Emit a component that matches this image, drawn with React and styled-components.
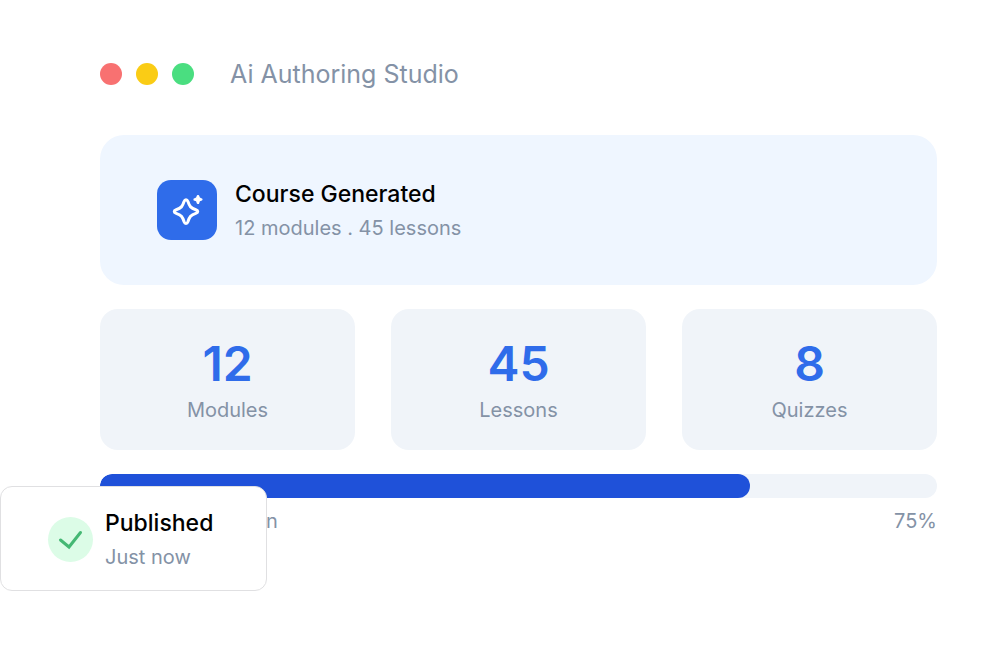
import React from "react";
import styled, { createGlobalStyle, css } from "styled-components";

const GlobalStyle = createGlobalStyle`
  *, *::before, *::after {
    box-sizing: border-box;
  }
  body {
    margin: 0;
    background: #ffffff;
    font-family: Inter, "Liberation Sans", sans-serif;
  }
  h1, h2, p, dl, dt, dd {
    margin: 0;
  }
`;

const mutedText = css`
  color: #8492a6;
  font-weight: 400;
  font-size: 20px;
  line-height: 32px;
`;

const Window = styled.main`
  position: relative;
  display: flex;
  flex-direction: column;
  gap: 24px;
  min-height: 100vh;
  padding: 54px 61px 54px 100px;
`;

const TitleBar = styled.header`
  display: flex;
  align-items: center;
  gap: 36px;
  margin-bottom: 17px;
`;

const Dots = styled.div`
  display: flex;
  gap: 14px;
`;

const Dot = styled.span`
  width: 22px;
  height: 22px;
  border-radius: 50%;
  background: ${(props) => props.$color};
`;

const WindowTitle = styled.h1`
  color: #8492a6;
  font-weight: 400;
  font-size: 25px;
  line-height: 40px;
`;

const Banner = styled.section`
  display: flex;
  align-items: center;
  gap: 18px;
  min-height: 150px;
  padding: 40px 57px;
  border-radius: 24px;
  background: #eff6ff;
`;

const IconTile = styled.div`
  display: flex;
  align-items: center;
  justify-content: center;
  width: 60px;
  height: 60px;
  border-radius: 14px;
  background: #2f6cea;
`;

const Heading = styled.h2`
  color: #000000;
  font-weight: 500;
  font-size: 23px;
  line-height: 36px;
`;

const Muted = styled.p`
  ${mutedText};
`;

const Stats = styled.dl`
  display: grid;
  grid-template-columns: repeat(3, 1fr);
  gap: 36px;
`;

const StatCard = styled.div`
  display: flex;
  flex-direction: column-reverse;
  align-items: center;
  padding: 24px 16px;
  border-radius: 18px;
  background: #f0f4f9;
`;

const StatValue = styled.dd`
  color: #2f6cea;
  font-weight: 600;
  font-size: 48px;
  line-height: 61px;
`;

const StatLabel = styled.dt`
  ${mutedText};
`;

const Track = styled.div`
  height: 24px;
  overflow: hidden;
  border-radius: 12px;
  background: #f0f4f9;
`;

const Fill = styled.div`
  height: 100%;
  border-radius: 12px;
  background: #1f51d9;
`;

const ProgressRow = styled.div`
  display: flex;
  justify-content: space-between;
  padding-top: 7px;
`;

/* sits over the lower left corner of the window */
const Toast = styled.aside`
  position: absolute;
  top: 486px;
  left: 0;
  display: flex;
  align-items: center;
  gap: 12px;
  width: 267px;
  padding: 18px 47px 17px;
  border: 1px solid #e0e0e2;
  border-radius: 12px;
  background: #ffffff;
`;

const CheckCircle = styled.div`
  display: flex;
  align-items: center;
  justify-content: center;
  flex-shrink: 0;
  width: 45px;
  height: 45px;
  border-radius: 50%;
  background: #dcfce7;
`;

const SparkleIcon = () => (
  <svg width="36" height="36" viewBox="0 0 36 36" fill="none" aria-hidden="true">
    <path
      d="M17 7.7C17.9 7.7 18.5 8.3 18.9 9.4C20.5 14.4 21.8 16.2 26.8 17.8C29.4 18.6 29.4 20.6 26.8 21.4C21.8 23 20.5 24.8 18.9 29.8C18.1 32 15.9 32 15.1 29.8C13.5 24.8 12.2 23 7.2 21.4C4.6 20.6 4.6 18.6 7.2 17.8C12.2 16.2 13.5 14.4 15.1 9.4C15.5 8.3 16.1 7.7 17 7.7Z"
      stroke="#ffffff"
      strokeWidth="3"
      strokeLinejoin="round"
    />
    <path
      d="M29 4.2C29.2 6.4 30.1 7.3 32.3 7.5C30.1 7.7 29.2 8.6 29 10.800C28.800 8.600 27.900 7.700 25.700 7.500C27.900 7.300 28.800 6.400 29 4.200Z"
      fill="#ffffff"
      stroke="#ffffff"
      strokeWidth="2.6"
      strokeLinejoin="round"
    />
  </svg>
);

const CheckIcon = () => (
  <svg width="45" height="45" viewBox="0 0 45 45" fill="none" aria-hidden="true">
    <path
      d="M12.500 23L21 30L32.500 15.500"
      stroke="#45b874"
      strokeWidth="3"
      strokeLinecap="round"
    />
  </svg>
);

const stats = [
  { label: "Modules", value: 12 },
  { label: "Lessons", value: 45 },
  { label: "Quizzes", value: 8 },
];

const Stat = ({ label, value }) => (
  <StatCard>
    <StatLabel>{label}</StatLabel>
    <StatValue>{value}</StatValue>
  </StatCard>
);

const Progress = ({ label, text, width }) => (
  <section>
    <Track>
      <Fill style={{ width: `${width}%` }} />
    </Track>
    <ProgressRow>
      <Muted>{label}</Muted>
      <Muted>{text}</Muted>
    </ProgressRow>
  </section>
);

const App = () => (
  <>
    <GlobalStyle />
    <Window>
      <TitleBar>
        <Dots>
          <Dot $color="#f87171" />
          <Dot $color="#facc15" />
          <Dot $color="#4ade80" />
        </Dots>
        <WindowTitle>Ai Authoring Studio</WindowTitle>
      </TitleBar>
      <Banner>
        <IconTile>
          <SparkleIcon />
        </IconTile>
        <div>
          <Heading>Course Generated</Heading>
          <Muted>12 modules . 45 lessons</Muted>
        </div>
      </Banner>
      <Stats>
        {stats.map((stat) => (
          <Stat key={stat.label} label={stat.label} value={stat.value} />
        ))}
      </Stats>
      <Progress label="Course Generation" text="75%" width={77.6} />
      <Toast>
        <CheckCircle>
          <CheckIcon />
        </CheckCircle>
        <div>
          <Heading>Published</Heading>
          <Muted>Just now</Muted>
        </div>
      </Toast>
    </Window>
  </>
);

export default App;
